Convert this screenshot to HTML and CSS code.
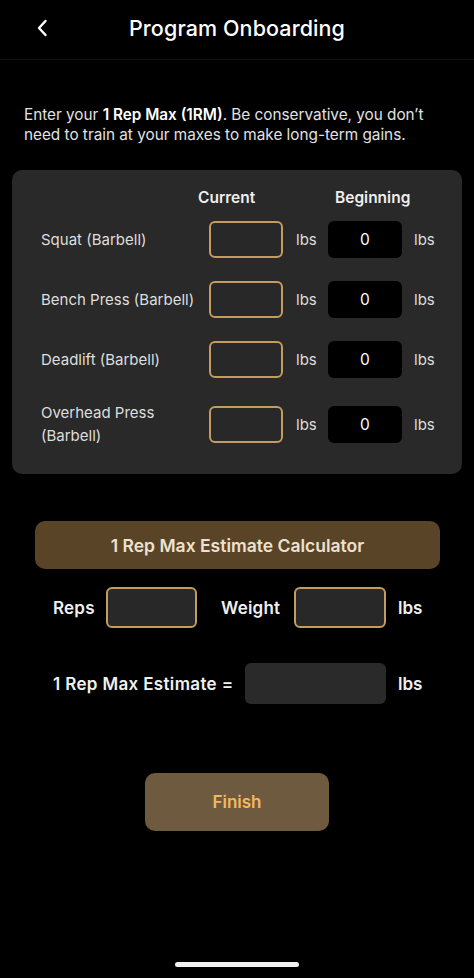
FILE: index.html
```html
<!DOCTYPE html>
<html lang="en">
<head>
<meta charset="utf-8">
<title>Program Onboarding</title>
<link rel="stylesheet" href="styles.css">
</head>
<body>
<div class="screen">
  <header class="topbar">
    <div class="back">
      <svg width="12" height="18" viewBox="0 0 12 18"><polyline points="9.5,2 3,9 9.5,16" fill="none" stroke="#fff" stroke-width="2.4" stroke-linecap="round" stroke-linejoin="round"/></svg>
    </div>
    <h1 class="title">Program Onboarding</h1>
    <div></div>
  </header>

  <p class="intro"><span>Enter your </span><b>1 Rep Max (1RM)</b><span>. Be conservative, you don’t need to train at your maxes to make long-term gains.</span></p>

  <section class="card">
    <div class="colhead">
      <span class="h-current">Current</span>
      <span class="h-begin">Beginning</span>
    </div>
    <div class="row">
      <span class="lift">Squat (Barbell)</span>
      <span class="field gold"></span>
      <span class="unit">lbs</span>
      <span class="field dark">0</span>
      <span class="unit">lbs</span>
    </div>
    <div class="row">
      <span class="lift">Bench Press (Barbell)</span>
      <span class="field gold"></span>
      <span class="unit">lbs</span>
      <span class="field dark">0</span>
      <span class="unit">lbs</span>
    </div>
    <div class="row">
      <span class="lift">Deadlift (Barbell)</span>
      <span class="field gold"></span>
      <span class="unit">lbs</span>
      <span class="field dark">0</span>
      <span class="unit">lbs</span>
    </div>
    <div class="row tall">
      <span class="lift">Overhead Press<br>(Barbell)</span>
      <span class="field gold"></span>
      <span class="unit">lbs</span>
      <span class="field dark">0</span>
      <span class="unit">lbs</span>
    </div>
  </section>

  <div class="calc-btn">1 Rep Max Estimate Calculator</div>

  <div class="calc-row">
    <span class="c-label">Reps</span>
    <span class="c-field gold reps"></span>
    <span class="c-label weight">Weight</span>
    <span class="c-field gold wt"></span>
    <span class="c-unit">lbs</span>
  </div>

  <div class="est-row">
    <span class="c-label est">1 Rep Max Estimate =</span>
    <span class="c-field est-box"></span>
    <span class="c-unit">lbs</span>
  </div>

  <div class="finish-wrap"><div class="finish">Finish</div></div>

  <div class="home"></div>
</div>
</body>
</html>
```
FILE: styles.css
```css
* { box-sizing: border-box; }
html, body { margin: 0; padding: 0; background: #000; }
body {
  font-family: Inter, "Open Sans", "Liberation Sans", sans-serif;
  color: #e6e6e6;
  width: 474px;
  height: 978px;
  overflow: hidden;
}
.screen { width: 474px; height: 978px; display: flex; flex-direction: column; }

.topbar {
  height: 60px;
  display: grid;
  grid-template-columns: 1fr auto 1fr;
  align-items: center;
  border-bottom: 1px solid #111;
  padding-bottom: 4px;
}
.back { padding-left: 36px; display: flex; align-items: center; height: 20px; }
.title {
  margin: 0;
  font-size: 21.5px;
  font-weight: 500;
  color: #fff;
  letter-spacing: 0.1px;
}

.intro {
  margin: 45px 24px 0 24px;
  font-size: 15.3px;
  line-height: 20px;
  color: #e2e2e2;
}
.intro b { font-weight: 600; color: #fff; }

.card {
  margin: 25px 12px 0 12px;
  background: #292929;
  border-radius: 10px;
  padding: 18px 0 27px 29px;
  display: flex;
  flex-direction: column;
  gap: 23px;
}
.card .colhead { margin-bottom: -10px; }
.colhead {
  display: grid;
  grid-template-columns: 157px 137px auto;
  height: 20px;
  line-height: 20px;
  font-size: 15.5px;
  font-weight: 600;
  color: #eee;
}
.h-current { grid-column: 2; }
.h-begin { grid-column: 3; }

.row {
  display: grid;
  grid-template-columns: 168px 74px 45px 74px auto;
  align-items: center;
  height: 37px;
  font-size: 15px;
  color: #dedede;
}
.row.tall { height: 46px; }
.lift { line-height: 23px; }
.field {
  height: 37px;
  border-radius: 6px;
  display: flex;
  align-items: center;
  justify-content: center;
  font-size: 15.5px;
  color: #fff;
}
.gold { border: 2px solid #c39c60; background: #282828; }
.dark { background: #000; }
.unit { padding-left: 13px; }
.row .unit:last-child { padding-left: 12px; }

.calc-btn {
  margin: 47px 34px 0 35px;
  height: 48px;
  background: #5a4427;
  border-radius: 10px;
  display: flex;
  align-items: center;
  justify-content: center;
  font-size: 17.5px;
  font-weight: 600;
  color: #ece2d2;
}

.calc-row {
  margin-top: 18px;
  padding-left: 53px;
  display: grid;
  grid-template-columns: 53px 91px 97px 92px auto;
  align-items: center;
  height: 41px;
}
.c-label { font-size: 17px; font-weight: 600; color: #f0f0f0; letter-spacing: 0.2px; }
.c-label.weight { padding-left: 24px; }
.c-label.est { letter-spacing: 0.35px; }
.c-field { height: 41px; border-radius: 6px; background: #282828; }
.c-unit { padding-left: 12px; font-size: 17px; font-weight: 600; color: #f0f0f0; }

.est-row {
  margin-top: 35px;
  padding-left: 53px;
  display: grid;
  grid-template-columns: 192px 141px auto;
  align-items: center;
  height: 41px;
}
.est-box { background: #2a2a2a; }

.finish-wrap { margin-top: 69px; display: flex; justify-content: center; }
.finish {
  width: 184px;
  height: 58px;
  border-radius: 10px;
  background: #6e5a3e;
  display: flex;
  align-items: center;
  justify-content: center;
  font-size: 17px;
  font-weight: 600;
  color: #f3b862;
}

.home {
  margin: 131px auto 0 auto;
  width: 124px;
  height: 5px;
  border-radius: 3px;
  background: #f2f2f2;
}
```
